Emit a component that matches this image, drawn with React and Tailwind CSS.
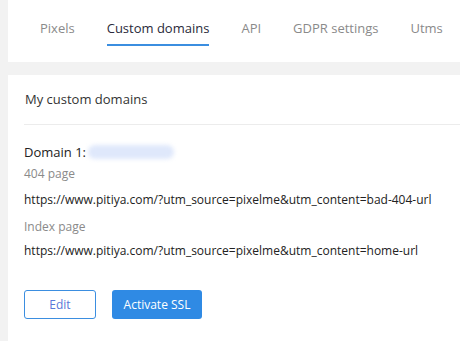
import React from 'react';

const tabs = ['Pixels', 'Custom domains', 'API', 'GDPR settings', 'Utms'];

function Tabs() {
  return (
    <div className="bg-white h-[62px] flex items-start pl-[32px] pt-[18px] gap-[32px]">
      {tabs.map((t) => {
        const active = t === 'Custom domains';
        return (
          <div
            key={t}
            className={
              'shrink-0 whitespace-nowrap pb-[6px] text-[13px] leading-[20px] border-b-2 ' +
              (active ? 'text-[#2a2a3a] border-[#3b8ee0]' : 'text-[#8a8a8a] border-transparent')
            }
          >
            {t}
          </div>
        );
      })}
    </div>
  );
}

function DomainsCard() {
  return (
    <div className="bg-white flex-1">
      <div className="h-[50px] flex items-center text-[13px] text-[#333] border-b border-[#ececec] ml-[16px] pl-[1px]">
        My custom domains
      </div>
      <div className="pl-[16px] pt-[16px]">
        <div className="flex items-center text-[13px] leading-[22px] text-[#222]">
          <span>Domain 1:</span>
          <span className="ml-[2px] inline-block w-[86px] h-[14px] rounded-full bg-[#dfe8fb] blur-[2px]" />
        </div>
        <div className="mt-[1px] text-[12px] leading-[20px] text-[#8a8a8a]">404 page</div>
        <div className="mt-[6px] text-[12px] leading-[20px] text-[#222] whitespace-nowrap">
          https://www.pitiya.com/?utm_source=pixelme&amp;utm_content=bad-404-url
        </div>
        <div className="mt-[7px] text-[12px] leading-[20px] text-[#8a8a8a]">Index page</div>
        <div className="mt-[4px] text-[12px] leading-[20px] text-[#222] whitespace-nowrap">
          https://www.pitiya.com/?utm_source=pixelme&amp;utm_content=home-url
        </div>
        <div className="mt-[29px] flex gap-[16px]">
          <button className="w-[72px] h-[29px] rounded-[3px] border border-[#3b8ee0] bg-white text-[12px] text-[#5a78d8]">
            Edit
          </button>
          <button className="w-[90px] h-[29px] rounded-[3px] bg-[#2f8ae4] text-[12px] text-white">
            Activate SSL
          </button>
        </div>
      </div>
    </div>
  );
}

export default function App() {
  return (
    <div
      className="w-[460px] h-[341px] overflow-hidden bg-[#f2f2f2] pl-[8px] flex flex-col gap-[13px]"
      style={{ fontFamily: '"Open Sans", "Noto Sans", sans-serif' }}
    >
      <Tabs />
      <DomainsCard />
    </div>
  );
}
